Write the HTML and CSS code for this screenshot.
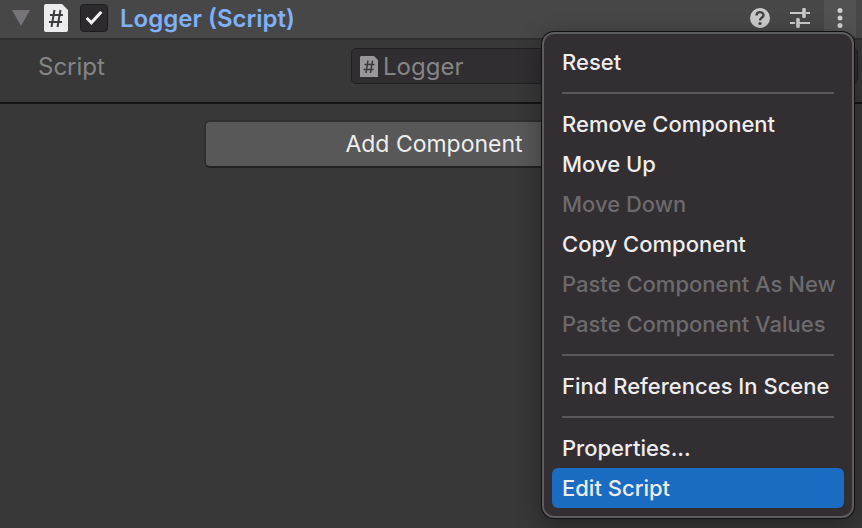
FILE: index.html
```html
<!DOCTYPE html>
<html lang="en">
<head>
<meta charset="utf-8">
<title>Inspector</title>
<link rel="stylesheet" href="styles.css">
</head>
<body>
<main class="inspector">
  <header class="component-header">
    <button class="foldout" type="button" aria-label="Collapse component">
      <svg width="18" height="16" viewBox="0 0 18 16"><path d="M0 0H18L9 16Z" fill="#77757a"/></svg>
    </button>
    <svg class="script-icon" width="24" height="28" viewBox="0 0 24 28" aria-hidden="true">
      <path d="M2 0H18L24 6V26Q24 28 22 28H2Q0 28 0 26V2Q0 0 2 0Z" fill="#ececee"/>
      <path d="M10.500 6L7.500 23M16.500 6L13.500 23M6 11H19M5 18H18" fill="none" stroke="#3c3c3c" stroke-width="2"/>
    </svg>
    <input class="enabled" type="checkbox" id="enabled" checked>
    <label class="component-title" for="enabled">Logger (Script)</label>
    <div class="header-tools">
      <button class="tool" type="button" aria-label="Help">
        <svg width="20" height="20" viewBox="0 0 20 20">
          <circle cx="10" cy="10" r="10" fill="#c9c9c9"/>
          <path d="M6.500 7.500C6.500 3 13.500 3 13.500 7.200C13.500 9.500 10 9.500 10 12.500" fill="none" stroke="#434343" stroke-width="2.400"/>
          <circle cx="10" cy="15.500" r="1.600" fill="#434343"/>
        </svg>
      </button>
      <button class="tool" type="button" aria-label="Presets">
        <svg width="20" height="20" viewBox="0 0 20 20">
          <path d="M0 5H13M16 5H20M0 15H5M9 15H20" stroke="#c9c9c9" stroke-width="2"/>
          <path d="M14 1.500V8.500M8 11.500V18.500" stroke="#c9c9c9" stroke-width="3.600" stroke-linecap="round"/>
        </svg>
      </button>
      <button class="tool tool-open" type="button" aria-label="More options" aria-expanded="true">
        <svg width="6" height="20" viewBox="0 0 6 20" fill="#cfcfcf">
          <circle cx="3" cy="2.500" r="2.500"/><circle cx="3" cy="10" r="2.500"/><circle cx="3" cy="17.500" r="2.500"/>
        </svg>
      </button>
    </div>
  </header>

  <section class="component-body">
    <span class="property-name">Script</span>
    <button class="object-field" type="button" disabled>
      <svg width="18" height="21" viewBox="0 0 18 21" aria-hidden="true">
        <path d="M1 0H14L18 4V21H0V1Z" fill="#989898"/>
        <path d="M8 4.500L6 17M12.500 4.500L10.500 17M4.500 8.500H14.500M3.500 13.500H13.500" fill="none" stroke="#39373a" stroke-width="1.500"/>
      </svg>
      <span>Logger</span>
    </button>
  </section>

  <footer class="component-actions">
    <button class="add-component" type="button">Add Component</button>
  </footer>
</main>

<div class="menu" role="menu">
  <button class="menu-item" role="menuitem" type="button">Reset</button>
  <hr class="menu-line">
  <button class="menu-item" role="menuitem" type="button">Remove Component</button>
  <button class="menu-item" role="menuitem" type="button">Move Up</button>
  <button class="menu-item" role="menuitem" type="button" disabled>Move Down</button>
  <button class="menu-item" role="menuitem" type="button">Copy Component</button>
  <button class="menu-item" role="menuitem" type="button" disabled>Paste Component As New</button>
  <button class="menu-item" role="menuitem" type="button" disabled>Paste Component Values</button>
  <hr class="menu-line">
  <button class="menu-item" role="menuitem" type="button">Find References In Scene</button>
  <hr class="menu-line">
  <button class="menu-item" role="menuitem" type="button">Properties...</button>
  <button class="menu-item selected" role="menuitem" type="button">Edit Script</button>
</div>
</body>
</html>
```
FILE: styles.css
```css
* {
  box-sizing: border-box;
}

body {
  margin: 0;
  min-height: 100vh;
  overflow: hidden;
  background: #383838;
  font-family: Inter, "Liberation Sans", sans-serif;
  font-size: 24px;
}

button {
  margin: 0;
  padding: 0;
  border: 0;
  background: none;
  color: inherit;
  font: inherit;
}

svg {
  display: block;
  flex: none;
}

.component-header {
  display: flex;
  align-items: center;
  height: 40px;
  padding: 0 6px 2px 12px;
  border-bottom: 2px solid #303030;
  background: #474747;
}

.script-icon {
  margin: 0 12px 0 14px;
}

.enabled {
  appearance: none;
  display: grid;
  place-items: center;
  width: 28px;
  height: 28px;
  margin: 0 12px 0 0;
  border: 1px solid #1c1b1d;
  border-radius: 4px;
  background: #2c2a2d;
}

.enabled:checked::before {
  content: "";
  width: 17px;
  height: 14px;
  background: #f2f2f2;
  clip-path: polygon(0 55%, 13% 42%, 34% 68%, 86% 0, 100% 12%, 35% 100%);
}

.component-title {
  color: #80b0fb;
  font-size: 24px;
  font-weight: 600;
}

.header-tools {
  display: flex;
  gap: 4px;
  margin-left: auto;
}

.tool {
  display: grid;
  place-items: center;
  width: 36px;
  height: 36px;
}

.tool-open {
  width: 32px;
  margin-left: 2px;
  background: #525252;
}

.component-body {
  display: grid;
  grid-template-columns: 313px 1fr;
  align-items: start;
  height: 64px;
  padding: 8px 4px 0 38px;
  border-bottom: 2px solid #141414;
  color: #858585;
}

.property-name {
  line-height: 38px;
}

.object-field {
  display: flex;
  align-items: center;
  gap: 5px;
  height: 36px;
  padding: 0 8px;
  border: 1px solid #202020;
  border-radius: 5px;
  background: #302e31;
}

.component-actions {
  display: flex;
  justify-content: center;
  padding: 16px 0 0 6px;
}

.add-component {
  width: 460px;
  height: 48px;
  border: 2px solid #303030;
  border-bottom-color: #222222;
  border-radius: 6px;
  background: #585858;
  color: #eeeeee;
  font-size: 23px;
}

.menu {
  position: absolute;
  top: 32px;
  right: 8px;
  width: 312px;
  padding: 8px;
  border: 2px solid #5d5c5e;
  border-radius: 12px;
  background: #332e32;
  box-shadow: 0 0 0 1px #111111, 0 8px 24px 2px #00000050;
  color: #eeedee;
  font-size: 22px;
  font-weight: 500;
}

.menu-item {
  display: block;
  width: 100%;
  height: 40px;
  padding: 0 10px;
  border-radius: 6px;
  text-align: left;
  white-space: nowrap;
}

.menu-item:disabled {
  color: #6d6a6d;
}

.menu-item.selected {
  background: #1a6bc2;
}

.menu-line {
  height: 2px;
  margin: 10px;
  border: 0;
  background: #5a585a;
}
```
